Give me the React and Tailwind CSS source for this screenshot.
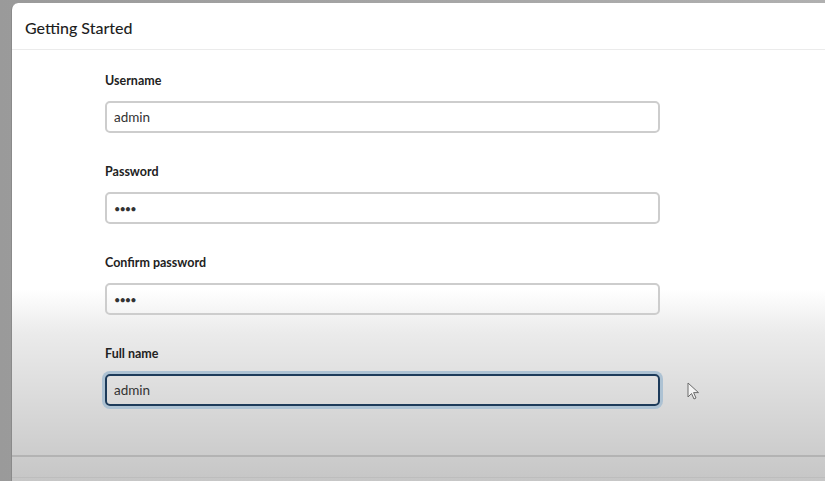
import { useState } from 'react';

const fieldFont = { fontFamily: 'Lato, "Noto Sans", sans-serif' };

function Field({ label, value, type = 'text', focused }) {
  return (
    <div className="flex flex-col">
      <label className="text-[12.5px] font-bold text-[#222] leading-[22px] mb-[9px]">{label}</label>
      <input
        type={type}
        defaultValue={value}
        readOnly
        className={
          'h-[32px] w-[555px] rounded-[5px] bg-transparent px-[7px] text-[#333] outline-none ' +
          (type === 'password' ? 'text-[11px] tracking-[-1px] text-[#111] ' : 'text-[13.5px] ') +
          (focused
            ? 'border-2 border-[#1d3b5a] shadow-[0_0_0_3px_#adc2d3]'
            : 'border-2 border-[#cdcdcd]')
        }
        style={fieldFont}
      />
    </div>
  );
}

function Cursor() {
  return (
    <svg className="absolute left-[687px] top-[382px]" width="14" height="19" viewBox="0 0 14 19">
      <path d="M1 1 L1 15 L4.5 11.5 L7 17 L9 16 L6.6 10.6 L11.5 10.6 Z" fill="#f4f4f4" stroke="#6a6a6a" strokeWidth="1" strokeLinejoin="round" />
    </svg>
  );
}

export default function App() {
  const [fields] = useState([
    { label: 'Username', value: 'admin' },
    { label: 'Password', value: 'adm1', type: 'password' },
    { label: 'Confirm password', value: 'adm1', type: 'password' },
    { label: 'Full name', value: 'admin', focused: true },
  ]);

  return (
    <div className="relative h-[481px] w-[825px] overflow-hidden bg-linear-to-r from-[#9a9a9a] to-[#b0b0b0] pl-[11px] pt-[3px]" style={fieldFont}>
      <div className="flex h-full flex-col rounded-tl-[7px] bg-linear-to-b from-white from-[60%] via-[#ebebeb] via-[69%] to-[#c6c6c6] border-l border-[#8a8a8a]">
        <div className="flex h-[47px] items-center border-b border-[#ebebeb] px-[13px] pt-[4px]">
          <h1 className="text-[16px] font-medium text-[#1e1e1e]">Getting Started</h1>
        </div>
        <div className="flex flex-1 flex-col gap-[28px] pl-[93px] pt-[20px]">
          {fields.map((f) => (
            <Field key={f.label} {...f} />
          ))}
        </div>
        <div className="h-[26px] border-t-2 border-[#b3b3b3]">
          <div className="mt-[20px] border-t border-[#bdbdbd]" />
        </div>
      </div>
      <Cursor />
    </div>
  );
}
